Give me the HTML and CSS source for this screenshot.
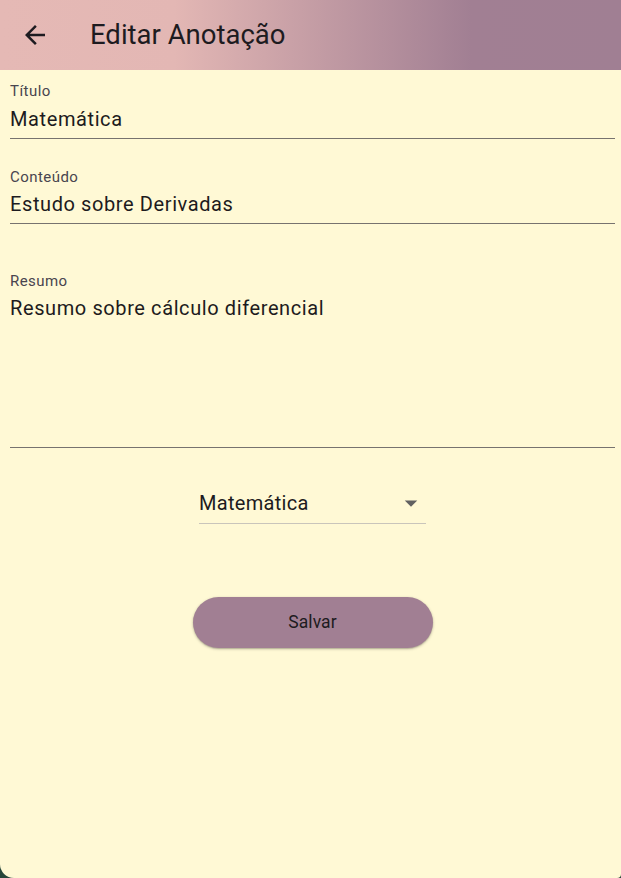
FILE: index.html
```html
<!DOCTYPE html>
<html lang="pt">
<head>
<meta charset="utf-8">
<title>Editar Anotação</title>
<link rel="stylesheet" href="styles.css">
</head>
<body>
<div class="screen">
  <header class="appbar">
    <button class="back" aria-label="Voltar">
      <svg viewBox="0 0 24 24" width="30" height="30"><path d="M20 11H7.83l5.59-5.59L12 4l-8 8 8 8 1.41-1.41L7.83 13H20v-2z" fill="#1d1b20"/></svg>
    </button>
    <h1 class="title">Editar Anotação</h1>
  </header>
  <main class="content">
    <div class="field">
      <div class="label">Título</div>
      <div class="input">Matemática</div>
    </div>
    <div class="field">
      <div class="label">Conteúdo</div>
      <div class="input">Estudo sobre Derivadas</div>
    </div>
    <div class="field field-multi">
      <div class="label">Resumo</div>
      <div class="input input-multi">Resumo sobre cálculo diferencial</div>
    </div>
    <div class="dropdown-row">
      <div class="dropdown">
        <span class="dropdown-text">Matemática</span>
        <svg class="dropdown-icon" viewBox="0 0 24 24" width="30" height="30"><path d="M7 10l5 5 5-5z" fill="#616161"/></svg>
      </div>
    </div>
    <div class="button-row">
      <button class="save">Salvar</button>
    </div>
  </main>
</div>
</body>
</html>
```
FILE: styles.css
```css
html {
  background: #27463a;
}
body {
  margin: 0;
  font-family: Roboto, "Noto Sans", sans-serif;
  color: #1d1b20;
}
.screen {
  min-height: 878px;
  background: #fff9d5;
  border-radius: 0 0 4px 14px;
  overflow: hidden;
}
.appbar {
  height: 70px;
  display: flex;
  align-items: center;
  background: linear-gradient(to right, #e5b9b5 0%, #e3b7b4 28%, #a17f93 76%, #a07f93 100%);
}
.back {
  width: 70px;
  height: 70px;
  padding: 0;
  border: 0;
  background: none;
  display: flex;
  align-items: center;
  justify-content: center;
}
.back svg {
  display: block;
}
.title {
  margin: 0 0 0 20px;
  font-size: 27.5px;
  font-weight: 400;
  line-height: 36px;
  color: #1d1b20;
}
.content {
  padding: 0 6px 0 10px;
}
.field {
  padding-top: 10px;
  margin-top: 17px;
  border-bottom: 1px solid #77736f;
}
.field:first-child {
  margin-top: 0;
}
.field-multi {
  margin-top: 36px;
}
.label {
  font-size: 15px;
  line-height: 22.5px;
  letter-spacing: 0.45px;
  color: #49454f;
}
.input {
  font-size: 20px;
  line-height: 30px;
  letter-spacing: 0.6px;
  color: #1d1b20;
  padding: 1px 0 4px;
}
.input-multi {
  height: 150px;
  padding-top: 0;
}
.dropdown-row {
  display: flex;
  justify-content: center;
  margin-top: 40px;
}
.dropdown {
  width: 227px;
  display: flex;
  align-items: center;
  justify-content: space-between;
  border-bottom: 1px solid #c9c5bb;
  padding-bottom: 5px;
}
.dropdown-text {
  font-size: 20px;
  line-height: 30px;
  letter-spacing: 0.3px;
  color: #1d1b20;
}
.dropdown-icon {
  display: block;
}
.button-row {
  display: flex;
  justify-content: center;
  margin-top: 73px;
}
.save {
  width: 240px;
  height: 51px;
  border: 0;
  border-radius: 25.5px;
  background: #a17f93;
  font-family: Roboto, "Noto Sans", sans-serif;
  font-size: 17.5px;
  font-weight: 400;
  letter-spacing: 0.1px;
  color: #1d1b20;
  box-shadow: 0 1px 3px rgba(0, 0, 0, 0.25), 0 1px 1px rgba(0, 0, 0, 0.12);
}
```
